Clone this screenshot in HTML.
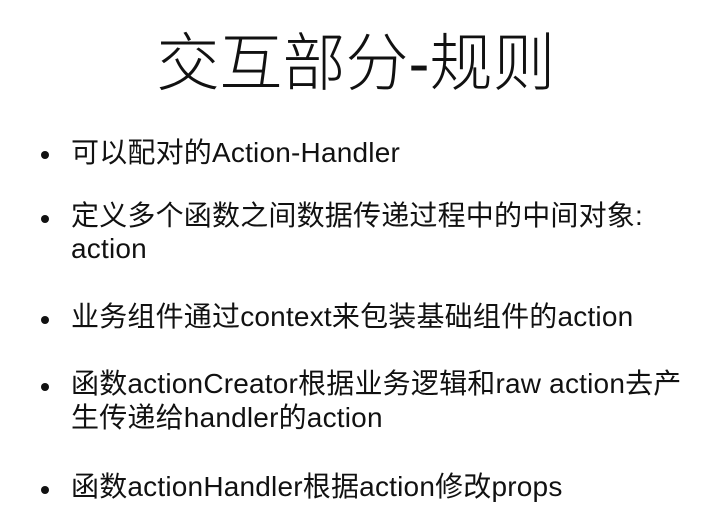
<!DOCTYPE html>
<html><head><meta charset="utf-8"><style>
body{margin:0;width:710px;height:528px;background:#fff;overflow:hidden;font-family:"Liberation Sans","Noto Sans CJK SC",sans-serif;color:#111;position:relative}
.t{position:absolute;left:0;width:712px;text-align:center;top:22px;font-size:63px;line-height:84px;font-weight:300}
.l{position:absolute;left:71px;font-size:28px;line-height:34px;white-space:nowrap;letter-spacing:0.2px}
.b{position:absolute;left:41px;width:8px;height:8px;border-radius:50%;background:#111}
</style></head><body>
<div class="t">交互部分-规则</div>
<div class="b" style="top:151px"></div><div class="l" style="top:136px">可以配对的Action-Handler</div>
<div class="b" style="top:215px"></div><div class="l" style="top:199px">定义多个函数之间数据传递过程中的中间对象:</div>
<div class="l" style="top:232px">action</div>
<div class="b" style="top:316px"></div><div class="l" style="top:300px">业务组件通过context来包装基础组件的action</div>
<div class="b" style="top:383px"></div><div class="l" style="top:367px">函数actionCreator根据业务逻辑和raw action去产</div>
<div class="l" style="top:401px">生传递给handler的action</div>
<div class="b" style="top:486px"></div><div class="l" style="top:470px">函数actionHandler根据action修改props</div>
</body></html>
